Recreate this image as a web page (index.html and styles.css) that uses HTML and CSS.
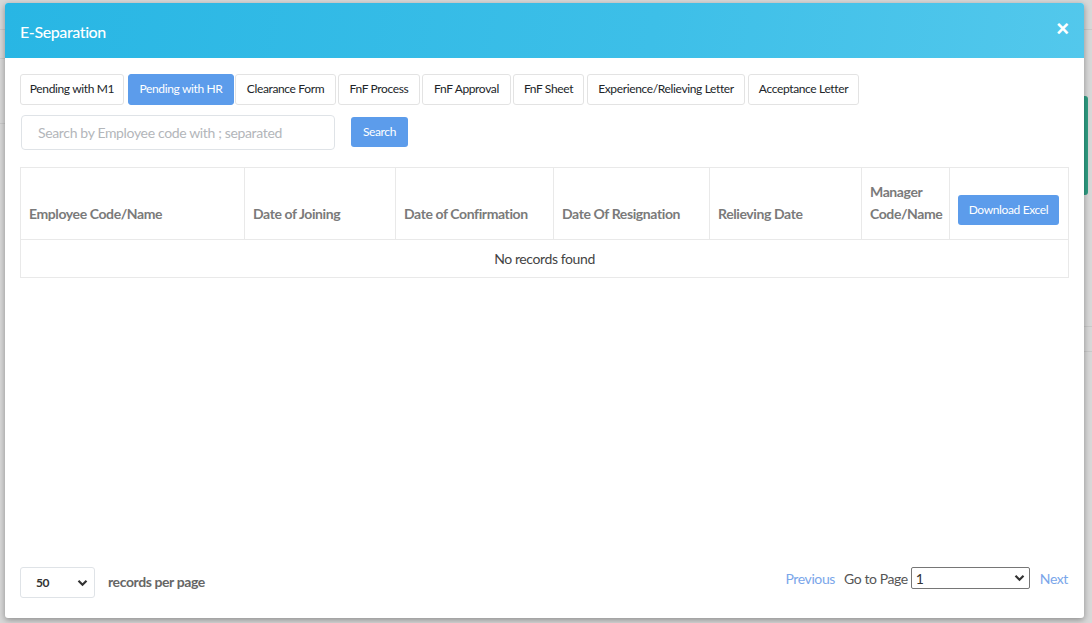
FILE: index.html
```html
<!DOCTYPE html>
<html>
<head>
<meta charset="utf-8">
<link rel="stylesheet" href="styles.css">
</head>
<body>
<div class="backdrop">
  <div class="bg-line l1"></div>
  <div class="bg-line l2"></div>
  <div class="bg-line l3"></div>
  <div class="bg-line r1"></div>
  <div class="bg-line r2"></div>
  <div class="bg-line r3"></div>
  <div class="bg-green"></div>
</div>
<div class="modal">
  <div class="modal-header">
    <div class="modal-title">E-Separation</div>
    <div class="close">&times;</div>
  </div>
  <div class="modal-body">
    <div class="tabs">
      <button class="tab">Pending with M1</button>
      <button class="tab active">Pending with HR</button>
      <button class="tab">Clearance Form</button>
      <button class="tab">FnF Process</button>
      <button class="tab">FnF Approval</button>
      <button class="tab">FnF Sheet</button>
      <button class="tab">Experience/Relieving Letter</button>
      <button class="tab">Acceptance Letter</button>
    </div>
    <div class="search-row">
      <input class="search-input" type="text" placeholder="Search by Employee code with ; separated">
      <button class="btn-blue search-btn">Search</button>
    </div>
    <table class="grid">
      <thead>
        <tr>
          <th class="c1">Employee Code/Name</th>
          <th class="c2">Date of Joining</th>
          <th class="c3">Date of Confirmation</th>
          <th class="c4">Date Of Resignation</th>
          <th class="c5">Relieving Date</th>
          <th class="c6">Manager Code/Name</th>
          <th class="c7"><button class="btn-blue dl-btn">Download Excel</button></th>
        </tr>
      </thead>
      <tbody>
        <tr><td colspan="7" class="empty">No records found</td></tr>
      </tbody>
    </table>
    <div class="footer">
      <div class="per-page">
        <div class="size-select"><span>50</span><svg width="11" height="8" viewBox="0 0 11 8"><path d="M1.5 1.8 L5.5 5.8 L9.5 1.8" fill="none" stroke="#333" stroke-width="2.2"/></svg></div>
        <span class="per-label">records per page</span>
      </div>
      <div class="pager">
        <a class="link">Previous</a>
        <span class="goto">Go to Page</span>
        <div class="page-select"><span>1</span><svg width="11" height="8" viewBox="0 0 11 8"><path d="M1.5 1.8 L5.5 5.8 L9.5 1.8" fill="none" stroke="#333" stroke-width="2.2"/></svg></div>
        <a class="link">Next</a>
      </div>
    </div>
  </div>
</div>
</body>
</html>
```

FILE: styles.css
```css
* { box-sizing: border-box; }
html, body { margin: 0; padding: 0; }
body {
  width: 1092px;
  height: 623px;
  overflow: hidden;
  background: #d8d8d8;
  font-family: "Source Sans Pro", Lato, "Noto Sans", sans-serif;
  letter-spacing: -0.025em;
  position: relative;
}
.backdrop { position: absolute; inset: 0; }
.bg-line { position: absolute; height: 1px; background: #c9c9c9; }
.l1 { left: 0; width: 6px; top: 29px; }
.l2 { left: 0; width: 6px; top: 58px; }
.l3 { left: 0; width: 6px; top: 123px; }
.r1 { right: 0; width: 10px; top: 29px; }
.r2 { right: 0; width: 10px; top: 326px; }
.r3 { right: 0; width: 10px; top: 351px; }
.bg-green { position: absolute; left: 1084px; top: 96px; width: 4px; height: 99px; background: #2f9e83; border-radius: 0 3px 3px 0; }

.modal {
  position: absolute;
  left: 5px;
  top: 3px;
  width: 1079px;
  height: 615px;
  background: #fff;
  border-radius: 3px;
  box-shadow: 0 2px 6px rgba(0,0,0,0.35);
  display: flex;
  flex-direction: column;
  overflow: hidden;
}
.modal-header {
  height: 55px;
  flex: none;
  background: linear-gradient(100deg, #28b6e4 0%, #3dbfe8 60%, #53c8ec 100%);
  display: flex;
  align-items: center;
  justify-content: space-between;
  padding: 0 15px 0 15px;
}
.modal-title { color: #fff; font-size: 16px; font-weight: 500; padding-top: 1px; }
.close { color: #fff; font-size: 22px; font-weight: 700; line-height: 1; margin-top: -4px; font-family: Arial, "Liberation Sans", sans-serif; letter-spacing: 0; }

.modal-body {
  flex: 1;
  display: flex;
  flex-direction: column;
  padding: 16px 16px 20px 15px;
}
.tabs { display: flex; }
.tab {
  height: 31px;
  padding: 0;
  white-space: nowrap;
  font-family: inherit;
  letter-spacing: -0.03em;
  font-size: 12px;
  color: #212529;
  background: #fff;
  border: 1px solid #e3e3e3;
  border-radius: 3px;
  padding-bottom: 2px;
}
.tab:nth-child(1) { width: 104px; }
.tab:nth-child(2) { width: 106px; margin-left: 4px; }
.tab:nth-child(3) { width: 101px; margin-left: 1px; }
.tab:nth-child(4) { width: 82px; margin-left: 2px; }
.tab:nth-child(5) { width: 89px; margin-left: 2px; }
.tab:nth-child(6) { width: 71px; margin-left: 2px; }
.tab:nth-child(7) { width: 158px; margin-left: 3px; }
.tab:nth-child(8) { width: 111px; margin-left: 3px; }
.tab.active { background: #5c9ceb; border-color: #5c9ceb; color: #fff; }

.search-row { display: flex; align-items: center; margin-top: 10px; gap: 16px; }
.search-input {
  width: 314px;
  height: 35px;
  margin-left: 1px;
  border: 1px solid #dfe3e7;
  border-radius: 4px;
  padding: 0 16px;
  font-family: inherit;
  letter-spacing: -0.025em;
  font-size: 14px;
  color: #495057;
  outline: none;
}
.search-input::placeholder { color: #b3b6ba; }
.btn-blue {
  background: #5c9ceb;
  border: none;
  color: #fff;
  border-radius: 3px;
  font-family: inherit;
  letter-spacing: -0.03em;
  font-size: 12px;
  white-space: nowrap;
  padding: 0;
}
.search-btn { width: 57px; height: 30px; margin-top: -2px; }

.grid {
  margin-top: 17px;
  width: 1048px;
  table-layout: fixed;
  border-collapse: collapse;
  border: 1px solid #e9e9e9;
}
.grid th {
  height: 72px;
  border: 1px solid #e9e9e9;
  text-align: left;
  vertical-align: bottom;
  padding: 0 8px 14px 8px;
  font-size: 14px;
  font-weight: 700;
  color: #7a7a7a;
  line-height: 22px;
}
.grid th.c7 { vertical-align: middle; padding: 0 8px; }
.c1 { width: 224px; }
.c2 { width: 151px; }
.c3 { width: 158px; }
.c4 { width: 156px; }
.c5 { width: 152px; }
.c6 { width: 88px; }
.c7 { width: 119px; }
.dl-btn { width: 101px; height: 30px; margin-top: 12px; }
.empty {
  height: 38px;
  text-align: center;
  font-size: 14px;
  color: #444;
  border: 1px solid #e9e9e9;
  padding-bottom: 2px;
}

.footer {
  margin-top: auto;
  display: flex;
  align-items: center;
  justify-content: space-between;
}
.per-page { display: flex; align-items: center; gap: 13px; }
.size-select {
  width: 75px;
  height: 31px;
  border: 1px solid #dfe3e7;
  border-radius: 3px;
  display: flex;
  align-items: center;
  justify-content: space-between;
  padding: 0 6px 0 15px;
  font-size: 12px;
  font-weight: 700;
  color: #333;
}
.per-label { font-size: 14px; font-weight: 700; color: #666; margin-top: -2px; }
.pager { display: flex; align-items: center; margin-top: -9px; margin-right: 0; }
.link { color: #7aa6ea; font-size: 14px; }
.goto { color: #555; font-size: 14px; margin-left: 9px; margin-right: 3px; }
.page-select {
  width: 119px;
  height: 22px;
  border: 1px solid #767676;
  border-radius: 2px;
  display: flex;
  align-items: center;
  justify-content: space-between;
  padding: 0 4px 0 4px;
  font-size: 14px;
  color: #333;
  margin-right: 10px;
}
```
